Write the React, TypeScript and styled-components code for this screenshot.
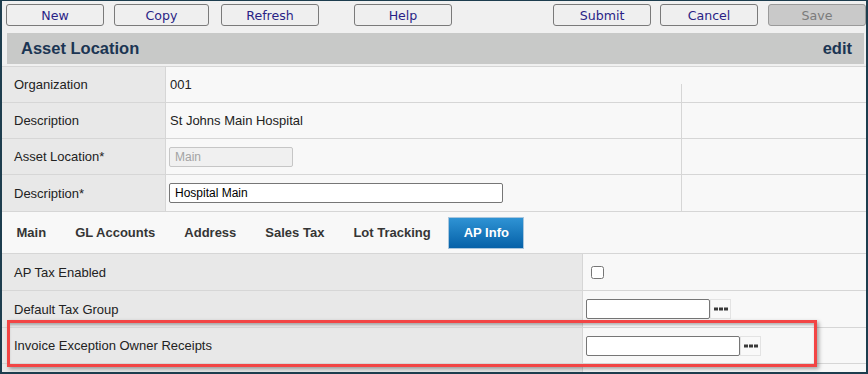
import React from "react";
import styled, { createGlobalStyle } from "styled-components";

const Global = createGlobalStyle`
  html, body { margin: 0; padding: 0; background: #ffffff; }
  body { font-family: "Liberation Sans", Arial, sans-serif; }
  * { box-sizing: border-box; }
`;

const Frame = styled.div`
  position: relative;
  width: 868px;
  height: 374px;
  border: 2px solid #1d3d4e;
  border-top-width: 1px;
  background: #f0f0f0;
  overflow: hidden;
  display: flex;
  flex-direction: column;
  & > * {
    flex-shrink: 0;
  }
`;

const Toolbar = styled.div`
  display: flex;
  justify-content: space-between;
  padding: 3px 0 0 4px;
  height: 25px;
`;

const ButtonGroup = styled.div`
  display: flex;
`;

const ToolButton = styled.button<{ $gap?: number; $w?: number; $disabled?: boolean }>`
  width: ${(p) => p.$w ?? 98}px;
  height: 22px;
  margin: 0 0 0 ${(p) => p.$gap ?? 0}px;
  padding: 1px 0 0;
  border: 1px solid ${(p) => (p.$disabled ? "#9a9a9a" : "#7a7a7a")};
  border-radius: 3px;
  background: ${(p) => (p.$disabled ? "#c9c9c9" : "#efefef")};
  color: ${(p) => (p.$disabled ? "#7b7b7b" : "#2a1f86")};
  font-family: "DejaVu Sans", Verdana, sans-serif;
  font-size: 12.6px;
  line-height: 19px;
  cursor: pointer;
`;

const Header = styled.div`
  margin: 7px 2px 0 5px;
  height: 31px;
  background: #c8c9c8;
  display: flex;
  align-items: center;
  justify-content: space-between;
  padding: 0 12px 0 14px;
  font-weight: bold;
  font-size: 16.5px;
  color: #1b3553;
`;

const TopForm = styled.div`
  margin-top: 2px;
  display: grid;
  grid-template-columns: 163px 516px 1fr;
  grid-template-rows: 36px 36px 36px 37px;
`;

const Cell = styled.div<{ $kind: "label" | "value" | "extra" }>`
  border-top: 1px solid #d6d6d6;
  border-left: ${(p) => (p.$kind === "label" ? "none" : "1px solid #d6d6d6")};
  background: ${(p) => (p.$kind === "label" ? "#e8e8e8" : "#f8f8f8")};
  display: flex;
  align-items: center;
  padding-left: ${(p) => (p.$kind === "label" ? 12 : 4)}px;
  font-size: 13px;
  color: #222222;
  white-space: nowrap;
`;

const SplitCell = styled.div`
  border-top: 1px solid #d6d6d6;
  background: #f8f8f8;
  display: flex;
  flex-direction: column;
`;

const SplitLine = styled.div`
  margin-top: 17px;
  flex: 1;
  border-left: 1px solid #d6d6d6;
`;

const TextInput = styled.input<{ $w: number; $shift?: boolean }>`
  width: ${(p) => p.$w}px;
  height: 20px;
  margin: 0 0 0 ${(p) => (p.$shift ? -1 : 0)}px;
  padding: 0 5px;
  border: 1px solid #767676;
  border-radius: 2px;
  background: #ffffff;
  font-family: "Liberation Sans", Arial, sans-serif;
  font-size: 12px;
  color: #000000;
  outline: none;
  &:disabled {
    background: #f0f0f0;
    border-color: #c6c6c6;
    color: #a3a3a3;
  }
`;

const TabBar = styled.div`
  border-top: 1px solid #d6d6d6;
  border-bottom: 1px solid #d6d6d6;
  background: #f8f8f8;
  height: 43px;
  display: flex;
  align-items: center;
`;

const Tab = styled.div<{ $active?: boolean }>`
  height: 32px;
  display: flex;
  align-items: center;
  padding: 0 14.5px;
  font-weight: bold;
  font-size: 13px;
  color: ${(p) => (p.$active ? "#ffffff" : "#353535")};
  margin-left: ${(p) => (p.$active ? "3px" : "0")};
  border: ${(p) => (p.$active ? "1px solid #a9c6dd" : "none")};
  background: ${(p) =>
    p.$active ? "linear-gradient(#2f93d4, #0561a8)" : "transparent"};
  white-space: nowrap;
`;

const DetailGrid = styled.div`
  display: grid;
  grid-template-columns: 580px 1fr;
  grid-template-rows: 37px 37px 36px 37px;
`;

const DetailCell = styled.div<{ $kind: "label" | "value" }>`
  border-bottom: 1px solid #d6d6d6;
  border-left: ${(p) => (p.$kind === "value" ? "1px solid #d6d6d6" : "none")};
  background: ${(p) => (p.$kind === "label" ? "#e8e8e8" : "#f8f8f8")};
  display: flex;
  align-items: center;
  padding-left: ${(p) => (p.$kind === "label" ? 12 : 3)}px;
  font-size: 13px;
  color: #222222;
  white-space: nowrap;
`;

const Check = styled.input`
  width: 13px;
  height: 13px;
  margin: 0 0 0 5px;
`;

const LookupButton = styled.span`
  width: 21px;
  height: 20px;
  border: 1px solid #e3e3e3;
  background: #f9f9f9;
  display: inline-flex;
  align-items: center;
  justify-content: center;
`;

const Annotation = styled.div`
  position: absolute;
  left: 5px;
  top: 319px;
  width: 810px;
  height: 47px;
  border: 3px solid #f24545;
  box-shadow: 2px 2px 4px rgba(0, 0, 0, 0.35),
    inset 0 3px 3px -1px rgba(0, 0, 0, 0.28);
  pointer-events: none;
`;

const Dots = () => (
  <svg width="14" height="4" viewBox="0 0 14 4">
    <rect x="0" y="0.5" width="4" height="3" fill="#3a3a3a" />
    <rect x="5" y="0.5" width="4" height="3" fill="#3a3a3a" />
    <rect x="10" y="0.5" width="4" height="3" fill="#3a3a3a" />
  </svg>
);

const Lookup = ({ w }: { w: number }) => (
  <>
    <TextInput $w={w} />
    <LookupButton>
      <Dots />
    </LookupButton>
  </>
);

export default function App() {
  return (
    <>
      <Global />
      <Frame>
        <Toolbar>
          <ButtonGroup>
            <ToolButton>New</ToolButton>
            <ToolButton $gap={10} $w={95}>Copy</ToolButton>
            <ToolButton $gap={12}>Refresh</ToolButton>
            <ToolButton $gap={35}>Help</ToolButton>
          </ButtonGroup>
          <ButtonGroup>
            <ToolButton>Submit</ToolButton>
            <ToolButton $gap={9}>Cancel</ToolButton>
            <ToolButton $gap={10} $disabled>Save</ToolButton>
          </ButtonGroup>
        </Toolbar>
        <Header>
          <span>Asset Location</span>
          <span>edit</span>
        </Header>
        <TopForm>
          <Cell $kind="label">Organization</Cell>
          <Cell $kind="value">001</Cell>
          <SplitCell>
            <SplitLine />
          </SplitCell>

          <Cell $kind="label">Description</Cell>
          <Cell $kind="value">St Johns Main Hospital</Cell>
          <Cell $kind="extra" />

          <Cell $kind="label">Asset Location*</Cell>
          <Cell $kind="value">
            <TextInput $w={124} $shift disabled defaultValue="Main" />
          </Cell>
          <Cell $kind="extra" />

          <Cell $kind="label">Description*</Cell>
          <Cell $kind="value">
            <TextInput $w={334} $shift defaultValue="Hospital Main" />
          </Cell>
          <Cell $kind="extra" />
        </TopForm>
        <TabBar>
          <Tab>Main</Tab>
          <Tab>GL Accounts</Tab>
          <Tab>Address</Tab>
          <Tab>Sales Tax</Tab>
          <Tab>Lot Tracking</Tab>
          <Tab $active>AP Info</Tab>
        </TabBar>
        <DetailGrid>
          <DetailCell $kind="label">AP Tax Enabled</DetailCell>
          <DetailCell $kind="value">
            <Check type="checkbox" />
          </DetailCell>

          <DetailCell $kind="label">Default Tax Group</DetailCell>
          <DetailCell $kind="value">
            <Lookup w={124} />
          </DetailCell>

          <DetailCell $kind="label">Invoice Exception Owner Receipts</DetailCell>
          <DetailCell $kind="value">
            <Lookup w={154} />
          </DetailCell>

          <DetailCell $kind="label" />
          <DetailCell $kind="value" />
        </DetailGrid>
        <Annotation />
      </Frame>
    </>
  );
}
